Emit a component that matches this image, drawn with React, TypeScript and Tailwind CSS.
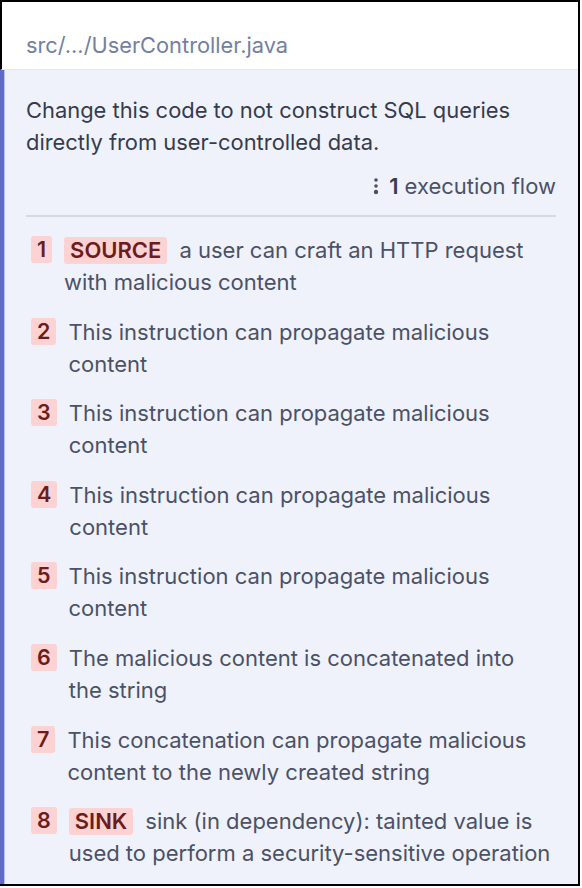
const flows = [
  { n: 1, tag: "SOURCE", text: "a user can craft an HTTP request with malicious content" },
  { n: 2, text: "This instruction can propagate malicious content" },
  { n: 3, text: "This instruction can propagate malicious content" },
  { n: 4, text: "This instruction can propagate malicious content" },
  { n: 5, text: "This instruction can propagate malicious content" },
  { n: 6, text: "The malicious content is concatenated into the string" },
  { n: 7, text: "This concatenation can propagate malicious content to the newly created string" },
  { n: 8, tag: "SINK", text: "sink (in dependency): tainted value is used to perform a security-sensitive operation" },
];

export default function App() {
  return (
    <div
      className="w-[580px] h-[886px] bg-white border-t-2 border-r-2 border-b-2 border-black flex flex-col"
      style={{ fontFamily: "Inter, 'Noto Sans', sans-serif" }}
    >
      <div className="h-[68px] shrink-0 border-l-2 border-black border-b border-b-[#e6e8ee] pl-[24px] flex items-center pt-[20px]">
        <span className="text-[21.8px] text-[#7480a0]">src/.../UserController.java</span>
      </div>
      <div className="flex-1 flex bg-[#eff2fa]">
        <div className="w-[4px] bg-[#5f6bc4] shrink-0" />
        <div className="w-[1px] bg-[#b9c0f0] shrink-0" />
        <div className="flex-1 pl-[21px] pr-[22px] pt-[24px] flex flex-col">
          <p className="text-[21.9px] leading-[32px] text-[#363b4d]">
            Change this code to not construct SQL queries directly from user-controlled data.
          </p>
          <div className="mt-[12px] flex items-center justify-end h-[32px] text-[22px]">
            <svg width="6" height="20" viewBox="0 0 6 20" className="mr-[10px]">
              <circle cx="3" cy="4" r="1.8" fill="#4a5063" />
              <circle cx="3" cy="10" r="1.8" fill="#4a5063" />
              <circle cx="3" cy="16" r="2.2" fill="#4a5063" />
            </svg>
            <span className="font-semibold text-[#363b4d] mr-[6px]">1</span>
            <span className="text-[#4b5166]">execution flow</span>
          </div>
          <div className="mt-[13px] h-[2px] bg-[#d5d9e3]" />
          <div className="mt-[17px] pr-[4px] flex flex-col gap-[17.6px]">
            {flows.map((f) => (
              <div key={f.n} className="flex items-start gap-[12px] pl-[5px]">
                <span className="mt-[2px] h-[27px] px-[6px] rounded-[3px] bg-[#fdd2d2] text-[#6b1d1d] font-semibold text-[21.5px] leading-[27px] shrink-0">
                  {f.n}
                </span>
                <p className="text-[22px] leading-[32px] text-[#4b5166]">
                  {f.tag && (
                    <span className="inline-block h-[27px] px-[6px] mr-[12px] rounded-[3px] bg-[#fdd2d2] text-[#6b1d1d] font-semibold leading-[27px]">
                      {f.tag}
                    </span>
                  )}
                  {f.text}
                </p>
              </div>
            ))}
          </div>
        </div>
      </div>
    </div>
  );
}
